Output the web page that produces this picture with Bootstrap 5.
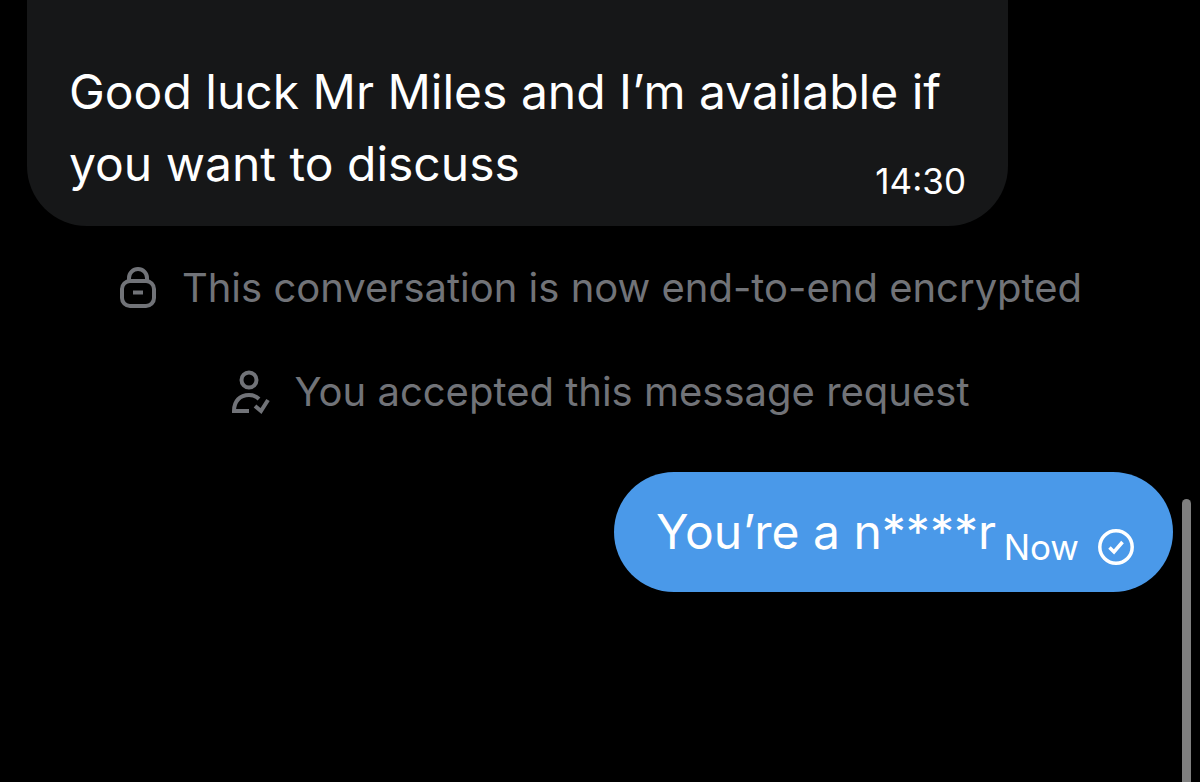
<!DOCTYPE html>
<html lang="en">
<head>
<meta charset="utf-8">
<meta name="viewport" content="width=device-width, initial-scale=1">
<title>Conversation</title>
<link href="https://cdn.jsdelivr.net/npm/bootstrap@5.3.0/dist/css/bootstrap.min.css" rel="stylesheet">
<style>
body{background:#000;color:#fff;font-family:Inter,"Liberation Sans",sans-serif}
.chat{padding:0 27px}
.bubble-in{background:#161718;max-width:981px;border-radius:0 0 60px 60px;padding:56px 42px 21px}
.message{font-size:48px;line-height:72px}
.stamp{font-size:35px;line-height:48px}
.bubble-in .stamp{margin-top:29px}
.notice{color:#717378;font-size:40px;line-height:56px;gap:24px}
.notices{padding:34px 0 52px;gap:48px}
.bubble-out{background:#4a99e9;border-radius:60px;padding:24px 38px 24px 42px;min-width:559px}
.bubble-out .stamp{gap:18px;padding-top:30px;height:72px}
.scroll-thumb{position:fixed;right:9px;top:499px;bottom:0;width:9px;border-radius:5px 5px 0 0;background:#7f7f7f}
</style>
</head>
<body>
<main class="chat d-flex flex-column">
<article class="bubble-in w-100">
<p class="message mb-0">Good luck Mr Miles and I’m available if you want to discuss <time class="stamp float-end">14:30</time></p>
</article>
<section class="notices d-flex flex-column">
<div class="notice d-flex align-items-center justify-content-center">
<svg class="flex-shrink-0" width="40" height="44" viewBox="0 0 40 44" fill="none" stroke="currentColor" stroke-width="4" aria-hidden="true"><rect x="4" y="15" width="32" height="25" rx="8"/><path d="M11 15v-3a9 9 0 0 1 18 0v3"/><path d="M15 26.500h10"/></svg>
<span>This conversation is now end-to-end encrypted</span>
</div>
<div class="notice d-flex align-items-center justify-content-center">
<svg class="flex-shrink-0" width="40" height="44" viewBox="0 0 40 44" fill="none" stroke="currentColor" stroke-width="4" aria-hidden="true"><circle cx="19" cy="10" r="7.500"/><path d="M19 41H4c0-10 6-16 15-16 4 0 7 1 10 4"/><path d="M25 36l6 5 7-11"/></svg>
<span>You accepted this message request</span>
</div>
</section>
<article class="bubble-out align-self-end d-flex justify-content-between">
<p class="message mb-0">You’re a n****r</p>
<div class="stamp d-flex align-items-center">
<time>Now</time>
<svg width="38" height="38" viewBox="0 0 38 38" fill="none" stroke="currentColor" stroke-width="3.500" role="img" aria-label="Sent"><circle cx="19" cy="19" r="16.200"/><path d="M12.500 19.500l4.500 4.500 8.500-10"/></svg>
</div>
</article>
</main>
<div class="scroll-thumb" aria-hidden="true"></div>
<script src="https://cdn.jsdelivr.net/npm/bootstrap@5.3.0/dist/js/bootstrap.bundle.min.js"></script>
</body>
</html>
